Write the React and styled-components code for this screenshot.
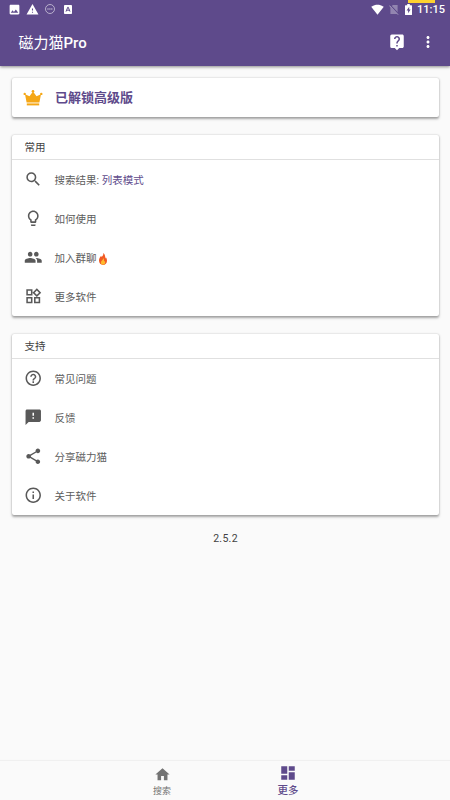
import React from 'react'
import styled, { createGlobalStyle, ThemeProvider } from 'styled-components'
import {
  MdImage,
  MdWarning,
  MdSignalWifi4Bar,
  MdLiveHelp,
  MdMoreVert,
  MdSearch,
  MdLightbulbOutline,
  MdPeople,
  MdOutlineWidgets,
  MdHelpOutline,
  MdFeedback,
  MdShare,
  MdInfoOutline,
  MdHome,
  MdDashboard
} from 'react-icons/md'

const theme = {
  colors: {
    primary: '#5e4a8b',
    background: '#fafafa',
    card: '#ffffff',
    text: '#424242',
    rowText: '#5c5c5c',
    icon: '#595959',
    muted: '#737373',
    crown: '#f5a716'
  }
}

const GlobalStyle = createGlobalStyle`
  * {
    box-sizing: border-box;
  }

  body {
    margin: 0;
    background-color: #fafafa;
    font-family: Roboto, 'Noto Sans CJK SC', sans-serif;
  }

  svg {
    display: block;
    flex-shrink: 0;
  }
`

const Screen = styled.div`
  height: 100vh;
  display: flex;
  flex-direction: column;
  overflow: hidden;
  background-color: ${props => props.theme.colors.background};
`

const Header = styled.header`
  height: 66px;
  flex-shrink: 0;
  color: #fff;
  background-color: ${props => props.theme.colors.primary};
  box-shadow: 0 1px 3px rgba(0, 0, 0, 0.45);
`

const StatusBar = styled.div`
  position: relative;
  height: 18px;
  display: flex;
  justify-content: space-between;
  align-items: center;
  padding: 0 6px 0 5px;
`

const RecordingTab = styled.span`
  position: absolute;
  top: 0;
  right: 15px;
  width: 27px;
  height: 2.5px;
  background-color: #fdd12f;
`

const Notifications = styled.div`
  display: grid;
  grid-template-columns: repeat(4, 18px);
  align-items: center;
  justify-items: center;
`

const SystemIcons = styled.div`
  display: flex;
  align-items: center;
  gap: 5.5px;
`

const Clock = styled.span`
  width: 27px;
  padding-top: 1px;
  font-size: 11px;
  line-height: 17px;
  font-weight: 500;
  white-space: nowrap;
`

const Toolbar = styled.div`
  height: 48px;
  display: flex;
  align-items: center;
  justify-content: space-between;
  padding: 0 13px 0 18.5px;
`

const Title = styled.h1`
  margin: 1px 0 0;
  font-size: 15px;
  line-height: 20px;
  font-weight: 500;

  span {
    font-weight: 400;
  }
`

const Actions = styled.div`
  display: flex;
  align-items: center;
  gap: 13px;
`

const Content = styled.main`
  flex: 1;
  display: flex;
  flex-direction: column;
  padding: 12px 11px 0 12px;
`

const Card = styled.section`
  margin-bottom: 18px;
  border-radius: 2px;
  background-color: ${props => props.theme.colors.card};
  box-shadow: 0 1.5px 2.5px rgba(0, 0, 0, 0.34), 0 0 2px rgba(0, 0, 0, 0.14);
`

const Premium = styled(Card)`
  height: 39px;
  display: flex;
  align-items: center;
  padding-left: 11px;
  gap: 12px;
  color: ${props => props.theme.colors.primary};
  font-size: 13px;
  line-height: 19px;
  font-weight: 700;
`

const CardTitle = styled.h2`
  height: 25px;
  margin: 0;
  padding: 1px 0 0 12.5px;
  border-bottom: 1px solid #e0e0e0;
  color: ${props => props.theme.colors.text};
  font-size: 10.5px;
  line-height: 24px;
  font-weight: 400;
`

const Row = styled.div`
  height: 39px;
  display: flex;
  align-items: center;
  gap: 12px;
  padding-left: 12px;
  color: ${props => props.theme.colors.rowText};
  font-size: 10.5px;
  line-height: 16px;

  > svg {
    color: ${props => props.theme.colors.icon};
  }
`

const RowLabel = styled.span`
  display: flex;
  align-items: center;
  padding-top: 2px;
  white-space: pre;
`

const Accent = styled.span`
  color: ${props => props.theme.colors.primary};
`

const Version = styled.div`
  margin-top: -3px;
  color: ${props => props.theme.colors.text};
  font-size: 10.5px;
  line-height: 18px;
  letter-spacing: 0.3px;
  text-align: center;
`

const BottomNav = styled.nav`
  height: 39px;
  flex-shrink: 0;
  display: flex;
  justify-content: center;
  box-shadow: 0 -1px 1px rgba(0, 0, 0, 0.04);
`

const NavItem = styled.div`
  width: 126px;
  display: flex;
  flex-direction: column;
  align-items: center;
  padding-top: ${props => (props.$active ? '3px' : '5px')};
  color: ${props =>
    props.$active ? props.theme.colors.primary : props.theme.colors.muted};
  font-size: ${props => (props.$active ? '10.5px' : '9px')};
  line-height: ${props => (props.$active ? '17px' : '16px')};
  font-weight: ${props => (props.$active ? 500 : 400)};
`

const DoNotDisturbIcon = () => (
  <svg width="10" height="10" viewBox="0 0 10 10" fill="none" stroke="#fff" opacity="0.8">
    <circle cx="5" cy="5" r="4.5" strokeWidth="0.7" />
    <path d="M2.3 5h5.4" strokeWidth="0.9" strokeDasharray="1.4 .5" />
  </svg>
)

const KeyboardIcon = () => (
  <svg width="8" height="9" viewBox="0 0 8 9">
    <rect width="8" height="9" rx="0.8" fill="#fff" />
    <path
      d="M2 6.6 3.8 2.2h.4L6 6.6M2.7 5.2h2.6"
      fill="none"
      stroke="#5e4a8b"
      strokeWidth="1"
    />
  </svg>
)

const NoSimIcon = () => (
  <svg width="10" height="11" viewBox="0 0 10 11" opacity="0.5">
    <path d="M3.8 1h4.8v9H1.4V3.4z" fill="#fff" opacity="0.65" />
    <path d="M.5 1 9.4 10.2" stroke="#5e4a8b" strokeWidth="1.8" />
    <path d="M.4 1.6 9 10.6" stroke="#fff" strokeWidth="1" />
  </svg>
)

const BatteryIcon = () => (
  <svg width="7" height="11" viewBox="0 0 7 11">
    <path
      d="M2.2 0h2.6v1.2h1.6q.6 0 .6.6v8.6q0 .6-.6.6H.6q-.6 0-.6-.6V1.8q0-.6.6-.6h1.6z"
      fill="#fff"
    />
    <path d="M4.2 2.8 1.6 6.6h1.5v2.6l2.5-3.8H4.2z" fill="#5e4a8b" />
  </svg>
)

const CrownIcon = () => (
  <svg width="20" height="18" viewBox="0 0 20 18" fill={theme.colors.crown}>
    <path d="M2 5.3 6.5 7.3 10 2.4l3.5 4.9L18 5.3l-1.6 8.3H3.6z" />
    <circle cx="1.7" cy="4.9" r="1.2" />
    <circle cx="10" cy="2.2" r="1.3" />
    <circle cx="18.3" cy="4.9" r="1.2" />
    <path d="M3.8 14.4h12.4v2H3.8z" />
  </svg>
)

const FireIcon = () => (
  <svg width="12" height="12" viewBox="0 0 12 12">
    <path
      d="M6.2 0c.5 2-.5 2.8-1.5 4-.4-.3-.5-.8-.4-1.3C2.8 3.8 2 5.7 2 7.6 2 10.3 3.7 12 6 12s4-1.7 4-4.2c0-1.5-.5-2.6-1.1-3.5 0 .6-.2 1-.6 1.3C8.5 3 7.7 1 6.2 0z"
      fill="#f15a24"
    />
    <path
      d="M6.5 4.9c.1 1.5-2.6 2.6-2.6 4.7C3.9 11 4.8 11.8 6 11.8s2.2-.9 2.2-2.2c0-.8-.3-1.4-.6-1.9-.1.5-.3.7-.6.9.1-1.3.1-2.6-.5-3.7z"
      fill="#fdbb2d"
    />
  </svg>
)

const COMMON_ITEMS = [
  {
    icon: MdSearch,
    label: (
      <>
        搜索结果: <Accent>列表模式</Accent>
      </>
    )
  },
  { icon: MdLightbulbOutline, label: '如何使用' },
  {
    icon: MdPeople,
    label: (
      <>
        加入群聊
        <FireIcon />
      </>
    )
  },
  { icon: MdOutlineWidgets, label: '更多软件' }
]

const SUPPORT_ITEMS = [
  { icon: MdHelpOutline, label: '常见问题' },
  { icon: MdFeedback, label: '反馈' },
  { icon: MdShare, label: '分享磁力猫' },
  { icon: MdInfoOutline, label: '关于软件' }
]

const MenuCard = ({ title, items }) => (
  <Card>
    <CardTitle>{title}</CardTitle>
    {items.map(({ icon: Icon, label }, index) => (
      <Row key={index}>
        <Icon size={18.5} />
        <RowLabel>{label}</RowLabel>
      </Row>
    ))}
  </Card>
)

const App = () => (
  <ThemeProvider theme={theme}>
    <GlobalStyle />
    <Screen>
      <Header>
        <StatusBar>
          <RecordingTab />
          <Notifications>
            <MdImage size={13} />
            <MdWarning size={13} />
            <DoNotDisturbIcon />
            <KeyboardIcon />
          </Notifications>
          <SystemIcons>
            <MdSignalWifi4Bar size={13} />
            <NoSimIcon />
            <BatteryIcon />
            <Clock>11:15</Clock>
          </SystemIcons>
        </StatusBar>
        <Toolbar>
          <Title>
            <span>磁力猫</span>Pro
          </Title>
          <Actions>
            <MdLiveHelp size={18} />
            <MdMoreVert size={18} />
          </Actions>
        </Toolbar>
      </Header>
      <Content>
        <Premium>
          <CrownIcon />
          <span>已解锁高级版</span>
        </Premium>
        <MenuCard title="常用" items={COMMON_ITEMS} />
        <MenuCard title="支持" items={SUPPORT_ITEMS} />
        <Version>2.5.2</Version>
      </Content>
      <BottomNav>
        <NavItem>
          <MdHome size={17} />
          搜索
        </NavItem>
        <NavItem $active>
          <MdDashboard size={18} />
          更多
        </NavItem>
      </BottomNav>
    </Screen>
  </ThemeProvider>
)

export default App
